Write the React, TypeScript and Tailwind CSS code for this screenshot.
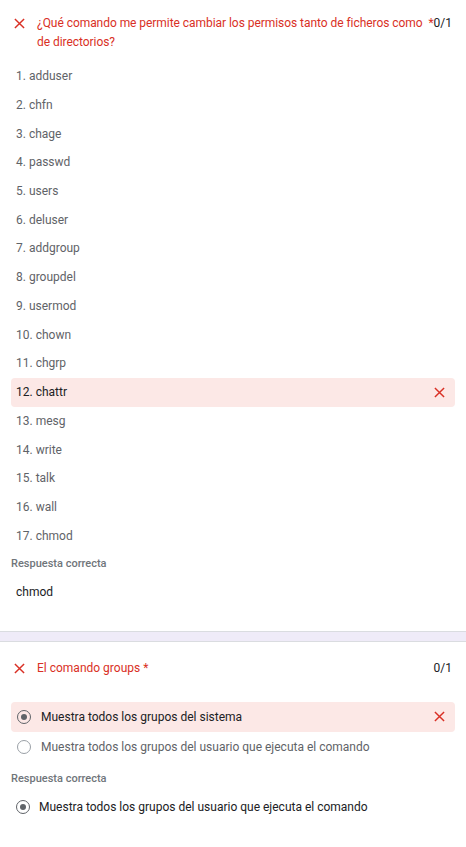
const commands = [
  'adduser', 'chfn', 'chage', 'passwd', 'users', 'deluser', 'addgroup', 'groupdel',
  'usermod', 'chown', 'chgrp', 'chattr', 'mesg', 'write', 'talk', 'wall', 'chmod',
];

function XIcon({ className = '' }: { className?: string }) {
  return (
    <svg viewBox="0 0 12 12" className={className} fill="none" stroke="currentColor" strokeWidth="1.6">
      <path d="M1 1 L11 11 M11 1 L1 11" />
    </svg>
  );
}

function Radio({ checked }: { checked?: boolean }) {
  return (
    <span className="w-[14px] h-[14px] rounded-full border-[1.5px] border-[#5f6368] flex items-center justify-center shrink-0">
      {checked && <span className="w-[6px] h-[6px] rounded-full bg-[#5f6368]" />}
    </span>
  );
}

export default function App() {
  return (
    <div className="w-[466px] min-h-[847px] bg-white text-[#202124]" style={{ fontFamily: 'Roboto, "Liberation Sans", sans-serif' }}>
      {/* Question 1 */}
      <section className="pt-[14px] pb-[30px]">
        <div className="flex items-start pl-[14px] pr-[14px]">
          <XIcon className="w-[11px] h-[11px] text-[#d93025] mt-[4px] shrink-0" />
          <p className="ml-[12px] flex-1 text-[12px] leading-[19px] text-[#d93025] tracking-[-0.05px]">
            ¿Qué comando me permite cambiar los permisos tanto de ficheros como de directorios?
          </p>
          <span className="text-[12px] leading-[19px]">
            <span className="text-[#d93025]">*</span>0/1
          </span>
        </div>

        <ul className="mt-[10px] mx-[11px]">
          {commands.map((c, i) =>
            c === 'chattr' ? (
              <li key={c} className="h-[29px] flex items-center justify-between px-[5px] rounded-[4px] bg-[#fce8e6] text-[12px] text-[#202124]">
                <span>{i + 1}. {c}</span>
                <XIcon className="w-[11px] h-[11px] text-[#d93025] mr-[5px]" />
              </li>
            ) : (
              <li key={c} className="h-[28.7px] flex items-center px-[5px] text-[12px] text-[#5f6368]">
                {i + 1}. {c}
              </li>
            )
          )}
        </ul>

        <p className="mt-[6px] pl-[11px] text-[11px] font-medium text-[#70757a]">Respuesta correcta</p>
        <p className="mt-[10px] pl-[16px] text-[12px] text-[#202124]">chmod</p>
      </section>

      {/* Separator */}
      <div className="h-[11px] bg-[#efebf8] border-y border-[#dadce0]" />

      {/* Question 2 */}
      <section className="pt-[17px] pb-[30px]">
        <div className="flex items-center pl-[14px] pr-[14px]">
          <XIcon className="w-[11px] h-[11px] text-[#d93025] shrink-0" />
          <p className="ml-[12px] flex-1 text-[12px] leading-[19px] text-[#d93025]">El comando groups *</p>
          <span className="text-[12px] leading-[19px]">0/1</span>
        </div>

        <div className="mt-[24px] mx-[11px]">
          <div className="h-[30px] flex items-center justify-between pl-[6px] pr-[10px] rounded-[4px] bg-[#fce8e6]">
            <div className="flex items-center gap-[10px] text-[12px] text-[#202124]">
              <Radio checked />
              <span>Muestra todos los grupos del sistema</span>
            </div>
            <XIcon className="w-[11px] h-[11px] text-[#d93025]" />
          </div>
          <div className="h-[30px] flex items-center pl-[6px] gap-[10px] text-[12px] text-[#5f6368]">
            <span className="w-[14px] h-[14px] rounded-full border-[1.5px] border-[#9aa0a6] shrink-0" />
            <span>Muestra todos los grupos del usuario que ejecuta el comando</span>
          </div>
        </div>

        <p className="mt-[9px] pl-[11px] text-[11px] font-medium text-[#70757a]">Respuesta correcta</p>
        <div className="mt-[11px] pl-[16px] flex items-center gap-[9px] text-[12px] text-[#202124]">
          <Radio checked />
          <span>Muestra todos los grupos del usuario que ejecuta el comando</span>
        </div>
      </section>
    </div>
  );
}
